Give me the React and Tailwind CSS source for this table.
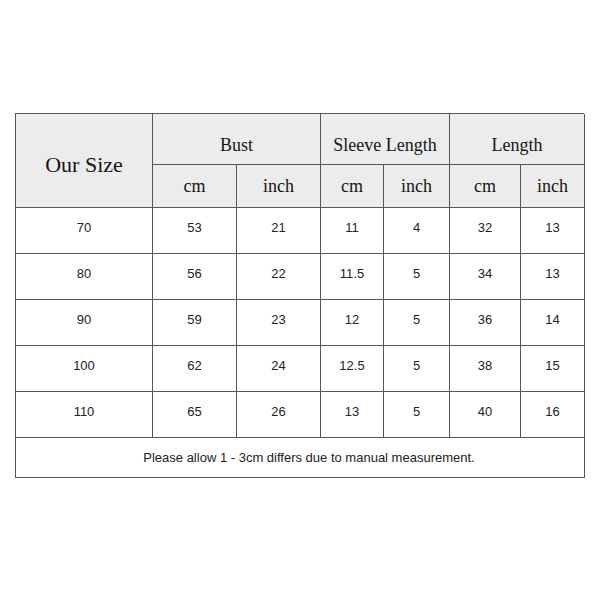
import React from "react";

const rows = [
  ["70", "53", "21", "11", "4", "32", "13"],
  ["80", "56", "22", "11.5", "5", "34", "13"],
  ["90", "59", "23", "12", "5", "36", "14"],
  ["100", "62", "24", "12.5", "5", "38", "15"],
  ["110", "65", "26", "13", "5", "40", "16"],
];

const hc =
  "border-r border-b border-[#555] bg-[#ececec] flex items-center justify-center text-[#161616] font-['Liberation_Serif','Times_New_Roman',serif]";
const dc =
  "border-r border-b border-[#555] flex items-center justify-center text-[13px] text-[#222] pb-[5px] font-['Liberation_Sans',Arial,sans-serif]";

export default function App() {
  return (
    <div className="w-[600px] h-[600px] bg-white pt-[113px] pl-[15px]">
      <div className="grid grid-cols-[137px_84px_84px_63px_66px_71px_64px] grid-rows-[51px_43px_46px_46px_46px_46px_46px_40px] w-[569px] border-t border-l border-[#555]">
        <div className={`${hc} row-span-2 text-[22px] pt-[8px]`}>Our Size</div>
        <div className={`${hc} col-span-2 text-[18px] pt-[13px]`}>Bust</div>
        <div className={`${hc} col-span-2 text-[18px] pt-[13px]`}>Sleeve Length</div>
        <div className={`${hc} col-span-2 text-[18px] pt-[13px]`}>Length</div>
        {["cm", "inch", "cm", "inch", "cm", "inch"].map((t, i) => (
          <div key={i} className={`${hc} text-[18px]`}>
            {t}
          </div>
        ))}
        {rows.map((r, ri) =>
          r.map((c, ci) => (
            <div key={ri + "-" + ci} className={dc}>
              {c}
            </div>
          ))
        )}
        <div className="border-r border-b border-[#555] col-span-7 flex items-center justify-center text-[13px] text-[#222] pl-[18px] font-['Liberation_Sans',Arial,sans-serif]">
          Please allow 1 - 3cm differs due to manual measurement.
        </div>
      </div>
    </div>
  );
}
